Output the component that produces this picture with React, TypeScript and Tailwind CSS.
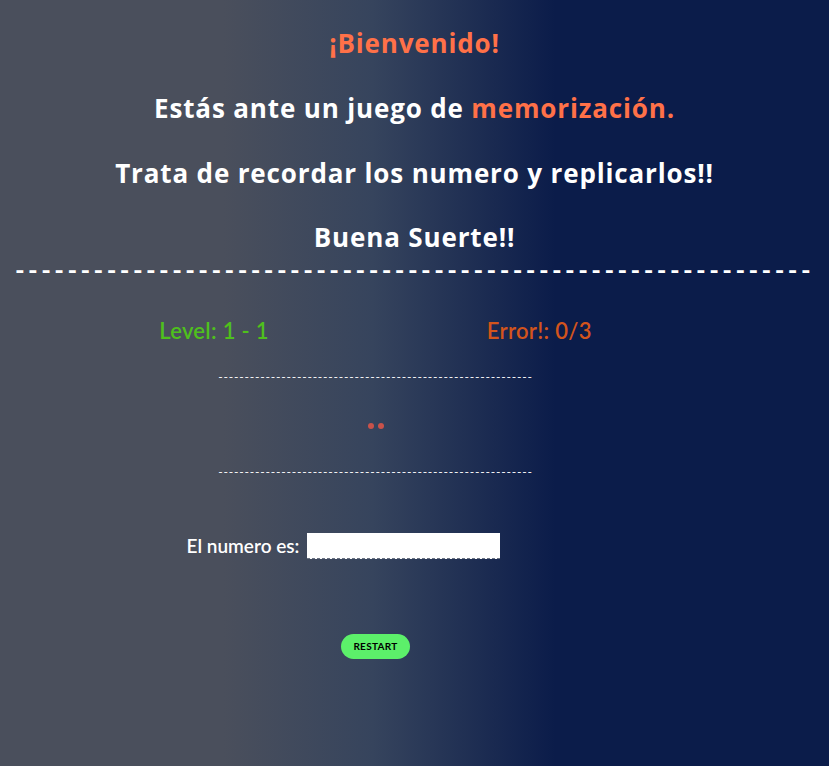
import React from "react";

const dashes = (n: number) => "-".repeat(n);

export default function App() {
    return (
        <div className="min-h-screen w-full bg-[linear-gradient(to_right,#4a4f5c_27%,#36445d_45%,#0b1c4a_67%)] font-['Lato','Liberation_Sans',sans-serif] text-white overflow-hidden">
            <div className="flex flex-col items-center pt-[25px] font-['Open_Sans','Liberation_Sans',sans-serif]">
                <h2 className="text-[26px] font-bold leading-[36px] tracking-[0.85px] text-[#ff7148]">¡Bienvenido!</h2>
                <h2 className="mt-[29px] text-[26px] font-bold leading-[36px] tracking-[0.85px]">
                    Estás ante un juego de <span className="text-[#ff7148]">memorización.</span>
                </h2>
                <h2 className="mt-[29px] text-[26px] font-bold leading-[36px] tracking-[0.85px]">
                    Trata de recordar los numero y replicarlos!!
                </h2>
                <h2 className="mt-[28px] text-[26px] font-bold leading-[36px] tracking-[0.85px]">Buena Suerte!!</h2>
                <p className="mt-[2px] font-['Lato',sans-serif] text-[26px] font-bold leading-[26px] tracking-[3.4px] whitespace-nowrap">{dashes(61)}</p>
            </div>

            <div className="w-[751px] flex flex-col items-center">
                <div className="mt-[33px] flex gap-[218px] text-[22px] font-semibold leading-[30px] tracking-[0.3px]">
                    <span className="text-[#4fc01c]">Level: 1 - 1</span>
                    <span className="text-[#d3541c]">Error!: 0/3</span>
                </div>

                <p className="mt-[24px] text-[12px] leading-[14px] whitespace-nowrap tracking-[0.78px]">{dashes(60)}</p>

                <div className="mt-[39px] flex gap-[4px]">
                    <span className="block w-[6px] h-[6px] rounded-full bg-[#c9524a]" />
                    <span className="block w-[6px] h-[6px] rounded-full bg-[#c9524a]" />
                </div>

                <p className="mt-[36px] text-[12px] leading-[14px] whitespace-nowrap tracking-[0.78px]">{dashes(60)}</p>

                <div className="mt-[53px] flex items-center gap-[8px] pr-[64px]">
                    <label htmlFor="numero" className="text-[19px] font-semibold">El numero es:</label>
                    <input
                        id="numero"
                        type="text"
                        className="w-[193px] h-[26px] bg-white border-b border-dashed border-gray-500 outline-none text-black px-1"
                    />
                </div>

                <button className="mt-[73px] h-[25px] px-[12px] rounded-full bg-[#5cf06a] text-black text-[10px] font-bold tracking-[0.3px]">
                    RESTART
                </button>
            </div>
        </div>
    );
}
